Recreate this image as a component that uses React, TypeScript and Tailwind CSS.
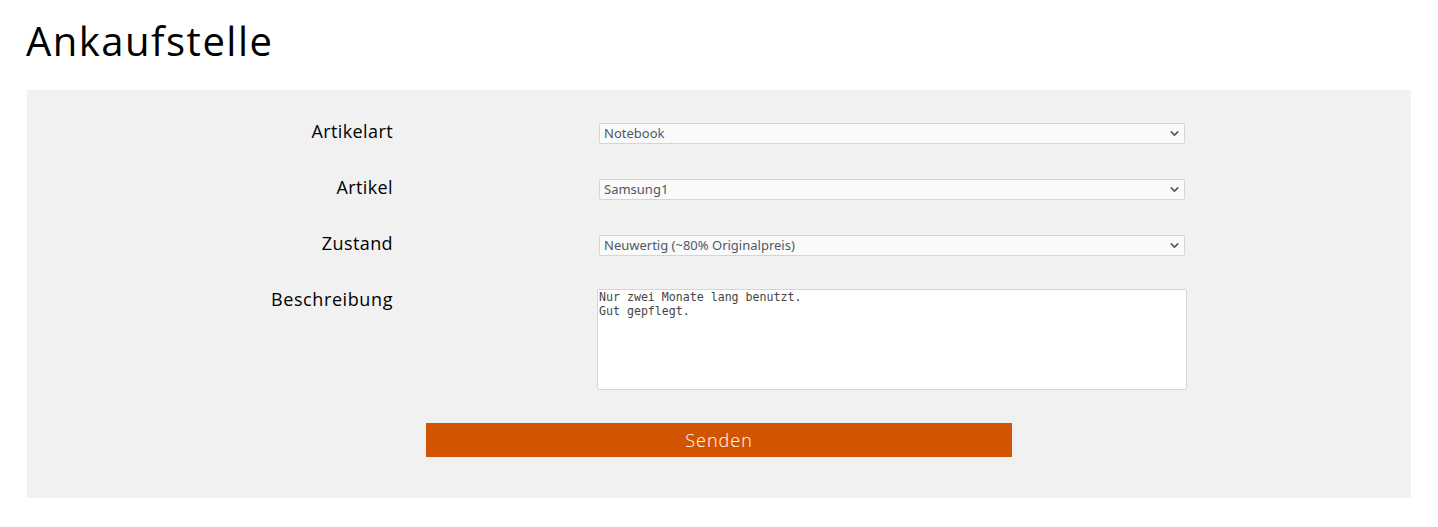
import { ChevronDown } from 'lucide-react';

const labelFont = { fontFamily: '"Open Sans", Lato, sans-serif' };

function SelectField({ value, options }: { value: string; options: string[] }) {
  return (
    <div className="relative w-[586px] h-[21px]">
      <select
        defaultValue={value}
        className="appearance-none block w-full h-full bg-[#fafafa] border border-[#cfd6e0] rounded-[2px] pl-[4px] text-[13px] text-[#4f5866] outline-none"
        style={{ fontFamily: '"Noto Sans", "DejaVu Sans", sans-serif' }}
      >
        {options.map((o) => (
          <option key={o}>{o}</option>
        ))}
      </select>
      <ChevronDown
        className="absolute right-[4px] top-[4px] size-[13px] text-[#555b66] pointer-events-none"
        strokeWidth={3}
      />
    </div>
  );
}

function Row({ label, children }: { label: string; children: React.ReactNode }) {
  return (
    <div className="flex items-start">
      <label
        className="w-[366px] text-right text-[18px] leading-[22px] tracking-[0.4px] text-black -mt-[3px]"
        style={labelFont}
      >
        {label}
      </label>
      <div className="ml-[206px]">{children}</div>
    </div>
  );
}

export default function App() {
  return (
    <div className="bg-white min-h-screen px-[27px] pt-[17px]">
      <h1
        className="text-[40px] leading-[48px] tracking-[1.5px] text-black -ml-[1px]"
        style={labelFont}
      >
        Ankaufstelle
      </h1>

      <form className="mt-[25px] bg-[#f1f1f1] pt-[33px] pb-[41px] flex flex-col">
        <div className="flex flex-col gap-[35px]">
          <Row label="Artikelart">
            <SelectField value="Notebook" options={['Notebook', 'Smartphone', 'Tablet']} />
          </Row>
          <Row label="Artikel">
            <SelectField value="Samsung1" options={['Samsung1', 'Samsung2', 'Lenovo1']} />
          </Row>
          <Row label="Zustand">
            <SelectField
              value="Neuwertig (~80% Originalpreis)"
              options={['Neuwertig (~80% Originalpreis)', 'Gebraucht (~50% Originalpreis)', 'Defekt (~10% Originalpreis)']}
            />
          </Row>
          <div className="flex items-start -mt-[2px]">
            <label
              className="w-[366px] text-right text-[18px] leading-[22px] tracking-[0.6px] text-black -mt-[1px]"
              style={labelFont}
            >
              Beschreibung
            </label>
            <textarea
              className="block ml-[204px] w-[590px] h-[101px] bg-white border border-[#cfd6e0] rounded-[2px] px-[1px] py-0 text-[11.6px] leading-[14px] text-[#444] resize-none outline-none"
              style={{ fontFamily: '"DejaVu Sans Mono", monospace' }}
              defaultValue={'Nur zwei Monate lang benutzt.\nGut gepflegt.'}
            />
          </div>
        </div>

        <button
          type="button"
          className="mt-[33px] ml-[399px] w-[586px] h-[34px] bg-[#d35400] text-white text-[18px] tracking-[1px] font-light"
          style={labelFont}
        >
          Senden
        </button>
      </form>
    </div>
  );
}
